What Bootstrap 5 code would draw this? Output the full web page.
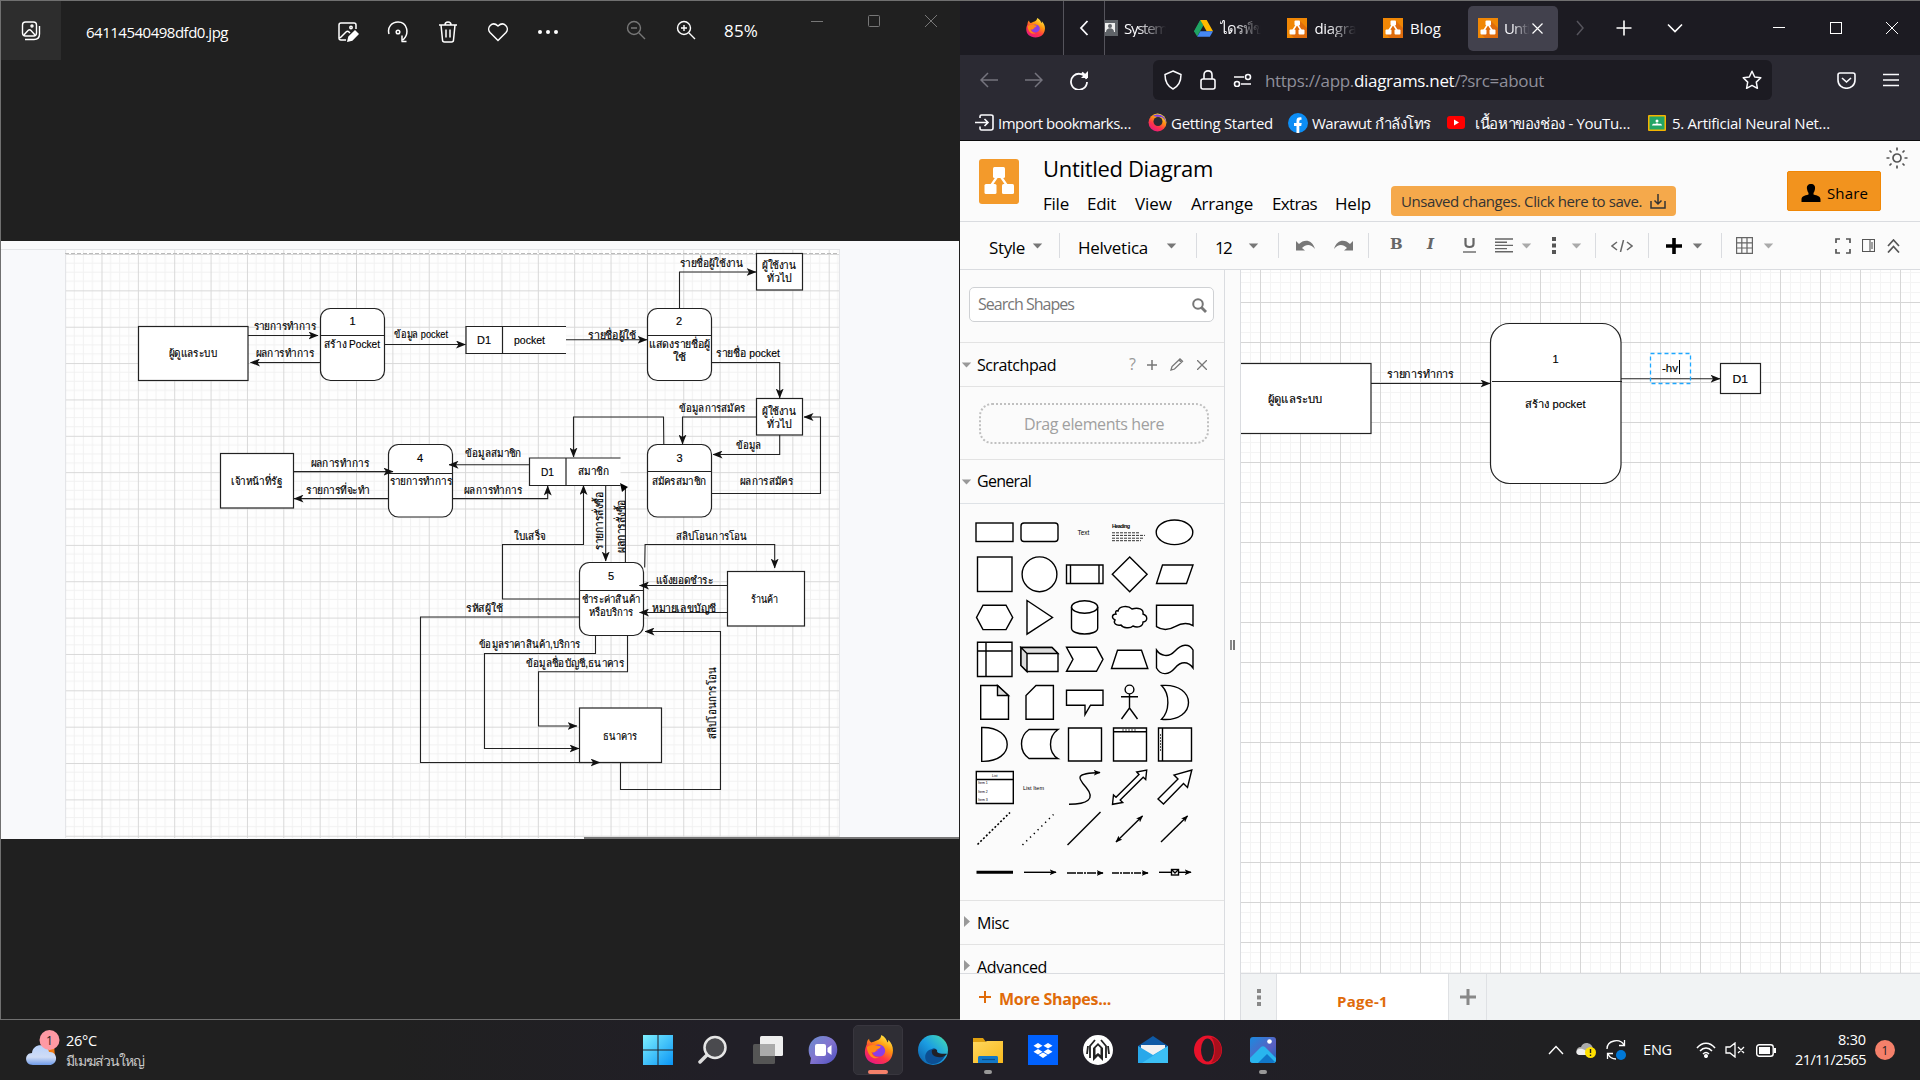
<!DOCTYPE html>
<html lang="th">
<head>
<meta charset="utf-8">
<title>Untitled Diagram</title>
<link rel="stylesheet" href="https://cdn.jsdelivr.net/npm/bootstrap@5.3.0/dist/css/bootstrap.min.css">
<script src="https://cdn.jsdelivr.net/npm/bootstrap@5.3.0/dist/js/bootstrap.bundle.min.js"></script>
<style>
body{width:1920px;height:1080px;overflow:hidden;background:#202020;font-family:"Open Sans","Noto Sans",sans-serif;font-size:15px;line-height:1.2;color:#000}
svg{display:block;flex:none}
.gr{display:grid;align-items:center;justify-items:center}
.gr>*{white-space:nowrap}
.l{justify-self:start}
.desk{height:1020px}
.photo{width:960px;background:#202020;border:1px solid #707070;border-right:0;color:#fff}
.photobar{height:59px;grid-template-columns:60px 25px 237px 50px 50px 50px 50px 50px 38px 50px 50px 13px 44px 20px 57px 57px 1fr}
.photobar>*{position:relative;top:1px}
.photobar>.first{background:#2d2d2d;width:60px;height:59px;top:0;display:flex;align-items:center;justify-content:center}
.photobar .up{top:-10px}
.photobar .zm{top:-1px}
.pct{font-size:17px}
.photoimg{margin-top:181px}
.browser{width:960px;border-top:1px solid #707070;background:#fbfbfb}
.tabs{height:54px;background:#1c1b22;color:#fbfbfe;grid-template-columns:103px 42px 19px 71px 17px 71.5px 27px 68.5px 27px 62px 90px 43px 45px 57px 76px 84px 1fr}
.tabs .line{justify-self:stretch;height:54px;border-left:1px solid #55545c;border-right:1px solid #55545c;display:flex;align-items:center;justify-content:center}
.fade1{-webkit-mask-image:linear-gradient(90deg,#000 30%,transparent 98%)}
.acttab{background:#42414d;width:90px;height:45px;border-radius:5px;display:flex;align-items:center;padding-left:10px;gap:6px}
.navi{height:50px;background:#2b2a33;grid-template-columns:6px 45px 45px 45px 52px 619px 49px 50px 1fr}
.urlbar{width:619px;height:40px;border-radius:6px;background:#1c1b22;grid-template-columns:2px 35px 35px 35px 5px 1fr 40px;color:#8f8f9a;font-size:17px}
.urlbar .l{margin-top:2px}
.urlbar b{font-weight:400;color:#fbfbfe}
.marks{height:36px;background:#2b2a33;color:#fbfbfe;border-bottom:1px solid #0c0c0d;grid-template-columns:10px 28px 145px 28px 113px 28px 132px 31px 166px 31px 1fr}
.marks .l{margin-top:1px}
.apphead{height:81px;border-bottom:1px solid #dadce0}
.logo{padding:18px 24px 0 19px}
.title{font-size:22px;line-height:26px;margin-top:14px}
.menu{grid-template-columns:44px 48px 56px 81px 63px 55px 286px;margin-top:8px;font-size:17px}
.unsaved{background:#f5a94b;border-radius:4px;width:285px;height:30px;color:#333;padding:0 10px;font-size:15px;margin:-3px 0 3px 1px}
.share{background:#f2931e;border:1px solid #f08705;border-radius:2px;width:94px;height:40px;padding:4px 0 0 13px;gap:6px;font-size:15px;margin:30px 0 0 111px}
.sun{margin:6px 0 0 5px}
.tools{height:48px;border-bottom:1px solid #dadce0;font-size:17px;justify-items:start;grid-template-columns:29px 43px 27px 19px 88px 30px 19px 33px 30px 18px 37px 35px 22px 37px 36px 32px 26px 31px 19px 24px 16px 37px 18px 26px 29px 15px 27px 72px 27px 25px 1fr}
.tools .l{margin-top:6px}
.tools b{font-family:"DejaVu Serif",serif;font-size:15px;color:#666;margin-top:-4px}
.sp{width:1px;height:25px;background:#dadce0}
.side{width:265px;border-right:1px solid #dadce0;height:750px}
.search{margin:17px 0 20px 9px;width:245px;height:35px;border:1px solid #cfd1d4;border-radius:5px;background:#fff;color:#777;padding:1px 6px 0 8px;font-size:16px}
.sec{height:44px;border-top:1px solid #e3e3e3;font-size:16px;grid-template-columns:17px 1fr}
.sec .l{margin-top:2px}
.sec .car{margin-right:5px}
.scr{grid-template-columns:17px 146px 19px 19px 31px 19px 1fr}
.scr .l{margin-top:3px}
.dropwrap{border-top:1px solid #e3e3e3;padding:.5px 0}
.drop{margin:15px 0 15px 19px;width:230px;height:41px;border:2px dotted #c0c0c0;border-radius:13px;color:#a0a0a0;font-size:16px;padding-top:3px}
.more{height:47px;border-top:1px solid #dadce0;color:#e06b0a;font-weight:700;font-size:16px;grid-template-columns:11px 28px 1fr;background:#fbfbfb}
.more .l{margin-top:5px}
.split{width:16px;border-right:1px solid #dadce0}
.grip{width:5px;height:10px;border-left:2px solid #888;border-right:2px solid #777}
.foot{height:47px;background:#f1f3f4;border-top:1px solid #dadce0;grid-template-columns:36px 172px 38px 1fr}
.foot>*{height:46px;display:flex;align-items:center;justify-content:center;justify-self:stretch;border-right:1px solid #dfe1e4}
.foot .page{background:#fff;color:#e06b0a;font-weight:700;font-size:15px;padding-top:8px}
.task{height:60px;background:linear-gradient(90deg,#202020 20%,#211f27 38%,#211f27 62%,#202022 80%);color:#fff;grid-template-columns:24px 42px 564px repeat(12,55px) 251px 30px 30px 28px 53px 32px 28px 32px 92px 37px 1fr}
.task .ff{width:50px;height:50px;border-radius:5px;background:#2f2e35;border:1px solid #38363e;display:flex;align-items:center;justify-content:center}
.task>.tr{font-size:14.5px;justify-self:end;line-height:20px;text-align:right}
.wx{font-size:14.5px;line-height:20px;margin-top:2px}
.wx2{color:#c8c8c8;font-size:14px}
.run{position:absolute;top:1070px;width:8px;height:3.5px;border-radius:2px;background:#999}
.d text{font-family:"Liberation Sans","Noto Sans",sans-serif;font-size:11px;fill:#000;stroke:#000;stroke-width:.15}
.d .ln{fill:none;stroke:#222;stroke-width:1.1}
.d .bx{fill:#fff;stroke:#222;stroke-width:1.2}
</style>
</head>
<body>
<svg width="0" height="0" class="position-absolute">
<defs>
<linearGradient id="gf" x1="0.8" y1="0" x2="0.2" y2="1"><stop offset="0" stop-color="#fff44f"/><stop offset=".35" stop-color="#ff980e"/><stop offset=".65" stop-color="#ff3647"/><stop offset="1" stop-color="#e31587"/></linearGradient>
<linearGradient id="ge" x1="0" y1="1" x2="1" y2="0"><stop offset="0" stop-color="#0c59a4"/><stop offset=".5" stop-color="#1b9de2"/><stop offset=".8" stop-color="#36c6c6"/><stop offset="1" stop-color="#66eb6e"/></linearGradient>
<linearGradient id="gw" x1="0" y1="0" x2="1" y2="1"><stop offset="0" stop-color="#7ef0ff"/><stop offset="1" stop-color="#0a95f5"/></linearGradient>
<linearGradient id="gc" x1="0" y1="0" x2="0" y2="1"><stop offset="0" stop-color="#b9d2fb"/><stop offset=".6" stop-color="#cfdcf5"/><stop offset="1" stop-color="#6f9be8"/></linearGradient>
<linearGradient id="gp" x1="0" y1="0" x2="1" y2="1"><stop offset="0" stop-color="#6b8fd0"/><stop offset=".5" stop-color="#8374cf"/><stop offset="1" stop-color="#4c4fc0"/></linearGradient>
<linearGradient id="gy" x1="0" y1="0" x2="1" y2="1"><stop offset="0" stop-color="#ffd75e"/><stop offset="1" stop-color="#f9b91d"/></linearGradient>
<linearGradient id="gi" x1="0" y1="0" x2="1" y2="1"><stop offset="0" stop-color="#1b8be0"/><stop offset=".6" stop-color="#5b5fc0"/><stop offset="1" stop-color="#0d6ac0"/></linearGradient>
<symbol id="firefox" viewBox="0 0 32 32"><path d="M4 10C4 7 5 5 6.500 4c0 2 1 3 2.500 4 2-1 3-1 5-2 3-1 5-2 5.500-6 4 2 6 5 6.500 8 1-1 1-2 1-3 5 5 6 11 4 17-2 6-7 9-14 9C8 31 2 26 2 18c0-3 1-6 2-8z" fill="url(#gf)"/><path d="M12 12c3-3 9-2 11 2s-1 9-6 9c-4 0-7-2-7-6 2 1 4 1 6-1-2 0-4-2-4-4z" fill="#8a3fe6"/><path d="M4 13c2-2 6-3 9-2 2 0 3 1 6 1-1 3-4 3-5 4-1 3-3 3-5 2 1 4 4 6 8 6-6 3-12-2-13-11z" fill="#ff8a16"/></symbol>
<symbol id="dio" viewBox="0 0 20 20"><path fill="#f08705" d="M0 0h20v20H0z"/><path fill="#df6c0c" d="M13 3l7 7v10H7l-4-4 7-8z"/><path d="M10 6L5.500 13M10 6l4.500 7" stroke="#fff" stroke-width="1.500"/><rect x="7.500" y="2.500" width="5.500" height="5" rx="1" fill="#fff"/><rect x="2.500" y="11.500" width="6" height="5" rx="1" fill="#fff"/><rect x="11.500" y="11.500" width="6" height="5" rx="1" fill="#fff"/></symbol>
<symbol id="car" viewBox="0 0 12 7"><path d="M.5.5h11L6 6.500z"/></symbol>
<marker id="ar" viewBox="0 0 10 8" refX="9.500" refY="4" markerWidth="10" markerHeight="8" markerUnits="userSpaceOnUse" orient="auto-start-reverse"><path d="M0 0l10 4-10 4 2.500-4z" fill="#111"/></marker>
<marker id="as" viewBox="0 0 10 8" refX="9" refY="4" markerWidth="7" markerHeight="6.500" markerUnits="userSpaceOnUse" orient="auto-start-reverse"><path d="M0 0l10 4-10 4 2.500-4z" fill="#000"/></marker>
<pattern id="g36" x="101.500" y="254" width="36.360" height="36.360" patternUnits="userSpaceOnUse"><path d="M9.100 0v36.400M18.200 0v36.400M27.300 0v36.400M0 9.100h36.400M0 18.200h36.400M0 27.300h36.400" stroke="#f1f1f1" fill="none"/><path d="M.5 0v36.400M0 .5h36.400" stroke="#d8d8d8" stroke-width="1" fill="none"/></pattern>
<pattern id="g40" x="1260" y="302" width="40" height="40" patternUnits="userSpaceOnUse"><path d="M10.500 0v40M20.500 0v40M30.500 0v40M0 10.500h40M0 20.500h40M0 30.500h40" stroke="#f4f4f4" fill="none"/><path d="M.5 0v40M0 .5h40" stroke="#d6d6d6" fill="none"/></pattern>
</defs>
</svg>

<div class="desk d-flex">
 <section class="photo">
  <div class="photobar gr">
   <span class="first"><svg width="20" height="20" viewBox="0 0 20 20" fill="none" stroke="#fff" stroke-width="1.400"><rect x="1.500" y="1" width="14" height="14" rx="3"/><path d="M4 18.500h9c4 0 5.500-1.500 5.500-5.500V5M3 14l4-4.500c1-1 2-1 3 0l4 4.500"/><circle cx="11" cy="5" r="1"/></svg></span>
   <i></i><span class="l" data-w="142">64114540498dfd0.jpg</span>
   <svg width="22" height="22" viewBox="0 0 22 22" fill="none" stroke="#fff" stroke-width="1.500"><path d="M9 19H4c-1 0-2-1-2-2V4c0-1 1-2 2-2h13c1 0 2 1 2 2v4M3 17l6-6c1-1 2-1 3 0l1 1"/><circle cx="14" cy="6.500" r="1.200"/><path d="M11 20l1-4 6-6 3 3-6 6z" fill="#fff"/></svg>
   <svg width="22" height="22" viewBox="0 0 22 22" fill="none" stroke="#fff" stroke-width="1.500"><path d="M2 13C0 6 5 1 11 1c9 0 12 11 5 18M14.500 20.500h5M15 20.500v-6"/><circle cx="11" cy="11" r="1.800"/></svg>
   <svg width="20" height="22" viewBox="0 0 20 22" fill="none" stroke="#fff" stroke-width="1.500"><path d="M1 4h18M7 4c0-4 6-4 6 0M3 4l1.500 15c0 1 1 2 2 2h7c1 0 2-1 2-2L17 4M8 8.500v8M12 8.500v8"/></svg>
   <svg width="22" height="20" viewBox="0 0 22 20" fill="none" stroke="#fff" stroke-width="1.500"><path d="M11 18.500L3 10.500C-1 6 5-1.500 11 4c6-5.500 12 2 8 6.500z"/></svg>
   <svg width="22" height="6" viewBox="0 0 22 6" fill="#fff"><circle cx="3" cy="3" r="2"/><circle cx="11" cy="3" r="2"/><circle cx="19" cy="3" r="2"/></svg>
   <i></i>
   <svg class="zm" width="20" height="20" viewBox="0 0 20 20" fill="none" stroke="#777" stroke-width="1.400"><circle cx="8" cy="8" r="6.500"/><path d="M13 13l6 6M5 8h6"/></svg>
   <svg class="zm" width="20" height="20" viewBox="0 0 20 20" fill="none" stroke="#fff" stroke-width="1.400"><circle cx="8" cy="8" r="6.500"/><path d="M13 13l6 6M5 8h6M8 5v6"/></svg>
   <i></i><span class="l pct" data-w="34">85%</span><i></i>
   <svg class="up" width="14" height="14" viewBox="0 0 14 14" stroke="#777"><path d="M1 7.500h12"/></svg>
   <svg class="up" width="14" height="14" viewBox="0 0 14 14" stroke="#777" fill="none"><rect x="1.500" y="1.500" width="11" height="11" rx="1"/></svg>
   <svg class="up" width="14" height="14" viewBox="0 0 14 14" stroke="#777"><path d="M1 1l12 12M13 1L1 13"/></svg>
  </div>
  <svg class="d photoimg" width="959" height="598" viewBox="1 241 959 598">
   <rect x="1" y="241" width="958" height="598" fill="#f8f9fb"/><rect x="1" y="241" width="958" height="8" fill="#fafafc"/>
   <rect x="65" y="249" width="774" height="589" fill="#fefefe"/><rect x="65" y="249" width="774" height="589" fill="url(#g36)"/>
   <path d="M65.500 249v589M839.500 249v589M1 249.500h838" stroke="#e4e5e8"/><path d="M65 253.500h774" stroke="#fff"/><path d="M65 253.500h774" stroke="#bbb" stroke-dasharray="4 2"/>
   <path d="M584 838h375" stroke="#777" stroke-width="2"/>
   <g class="bx"><rect x="138.500" y="326.500" width="109.500" height="54"/><rect x="320.500" y="308.500" width="64" height="72" rx="10"/><rect x="647.500" y="308.500" width="64" height="72" rx="10"/><rect x="647.500" y="444.500" width="64" height="72.500" rx="10"/><rect x="388.500" y="444.500" width="64" height="72.500" rx="10"/><rect x="579.500" y="562.500" width="64" height="73" rx="10"/><rect x="756.500" y="253.500" width="46" height="36.500"/><rect x="756.500" y="398.500" width="46" height="36.500"/><rect x="220.500" y="453.500" width="73" height="54.500"/><rect x="727.500" y="571.500" width="77" height="54.500"/><rect x="579.500" y="708" width="82" height="54.500"/><path d="M566 326.500H466V353.500h100M502.500 326.500v27" /><path d="M620.500 458H529.500v27.500h91M566 458v27.500"/></g>
   <g class="ln"><path d="M320.500 335.500h64M647.500 335.500h64M647.500 471.500h64M388.500 473.500h64M579.500 590.500h64"/>
   <g marker-end="url(#ar)"><path d="M248 335.500h70"/><path d="M320 362.500h-69.500"/><path d="M384 344.500h81.500"/><path d="M566 339.800h81"/><path d="M679.500 308v-36h76.500"/><path d="M711.500 362.500h68.200v35.500"/><path d="M711.500 493.500h109v-76.500H804"/><path d="M779.700 435v19.500H713"/><path d="M756 417h-73.500v27"/><path d="M663.800 444l-.3-27h-90v40"/><path d="M293.600 471.600H393"/><path d="M388 498.600H294"/><path d="M529.700 464.700H449"/><path d="M452.700 498.600h95V486"/><path d="M579.500 599h-77v-54.500h81v-59"/><path d="M605.700 486v75"/><path d="M644.700 567.500l.4-23h129.600V568"/><path d="M727 585.500h-87.500"/><path d="M727 612.500h-87.500"/><path d="M620.500 762.500v27h100V631.500H645"/><path d="M579.500 617h-159v145.500H600"/><path d="M595.500 635.500v18H484.500v95H579"/><path d="M627.500 635.500v36.200h-89V726H577"/></g>
   <path d="M625.400 562v-74"/></g><path d="M620 483l8 4-6 5z"/>
   <g id="tl"></g>
  </svg>
 </section>

 <section class="browser">
  <div class="tabs gr">
   <svg width="20" height="20" style="margin-left:46px"><use href="#firefox"/></svg>
   <span class="line"><svg width="12" height="16" viewBox="0 0 12 16" fill="none" stroke="#fbfbfe" stroke-width="1.800"><path d="M9.500 1L3 8l6.500 7"/></svg></span>
   <svg class="l" width="14" height="18" viewBox="0 0 14 18"><path d="M0 1h13v16H0" fill="#5f6368"/><path d="M0 4h10v9H0" fill="#eee"/><circle cx="5" cy="7" r="2" fill="#5f6368"/><path d="M1 13c0-5 8-5 8 0z" fill="#5f6368"/></svg>
   <span class="l fade1" data-w="43">System</span>
   <svg width="19" height="17" viewBox="0 0 18 16"><path fill="#11a861" d="M6 0h3.500L3.300 11.500 0 11z"/><path fill="#1fa463" d="M6 0L0 10.500l3 5L9 5z"/><path fill="#ffba00" d="M6 0h6l6 10.500h-6z"/><path fill="#4688f4" d="M6 10.500h12l-3 5.300H3z"/></svg>
   <span class="l fade1 ms-2" data-w="41">ไดรฟ์ข</span>
   <svg width="20" height="20"><use href="#dio"/></svg><span class="l fade1 ms-1" data-w="42">diagra</span>
   <svg width="20" height="20"><use href="#dio"/></svg><span class="l ms-1" data-w="31">Blog</span>
   <span class="acttab"><svg width="20" height="20"><use href="#dio"/></svg><span class="fade1" data-w="26">Unti</span><svg width="11" height="11" viewBox="0 0 11 11" stroke="#fff" stroke-width="1.200" style="margin-left:-4px"><path d="M.5.500l10 10M10.500.500l-10 10"/></svg></span>
   <svg width="10" height="16" viewBox="0 0 10 16" fill="none" stroke="#55545c" stroke-width="1.500"><path d="M2 1l6 7-6 7"/></svg>
   <svg width="16" height="16" viewBox="0 0 16 16" stroke="#fff" stroke-width="1.600"><path d="M8 .5v15M.5 8h15"/></svg>
   <svg width="16" height="10" viewBox="0 0 16 10" fill="none" stroke="#fff" stroke-width="1.600"><path d="M1 1.500l7 7 7-7"/></svg>
   <i></i>
   <svg class="l" width="72" height="14" viewBox="0 0 72 14" stroke="#fff" fill="none" style="margin-left:-6px"><path d="M0 6.500h12"/><rect x="57.500" y="1.500" width="11" height="11"/></svg>
   <svg width="14" height="14" viewBox="0 0 14 14" stroke="#fff"><path d="M1 1l12 12M13 1L1 13"/></svg>
  </div>
  <div class="navi gr"><i></i>
   <svg width="18" height="16" viewBox="0 0 18 16" fill="none" stroke="#75747e" stroke-width="1.500"><path d="M18 8H1M8 1L1 8l7 7"/></svg>
   <svg width="18" height="16" viewBox="0 0 18 16" fill="none" stroke="#75747e" stroke-width="1.500"><path d="M0 8h17M10 1l7 7-7 7"/></svg>
   <svg width="20" height="20" viewBox="0 0 20 20" fill="none" stroke="#fbfbfe" stroke-width="1.800"><path d="M17.500 9A8 8 0 1 0 18 12M16 5L13 2.500"/><path d="M19 1v7h-7z" fill="#fbfbfe" stroke="none"/></svg><i></i>
   <div class="urlbar gr"><i></i>
    <svg width="20" height="20" viewBox="0 0 20 20" fill="none" stroke="#fbfbfe" stroke-width="1.500"><path d="M10 1l8 3.500c0 7-2 11.500-8 14.500-6-3-8-7.500-8-14.500z"/></svg>
    <svg width="18" height="20" viewBox="0 0 18 20" fill="none" stroke="#fbfbfe" stroke-width="1.600"><rect x="2" y="9" width="14" height="10" rx="2"/><path d="M5 9V5c0-5.500 8-5.500 8 0v4"/></svg>
    <svg width="19" height="14" viewBox="0 0 19 14" fill="none" stroke="#fbfbfe" stroke-width="1.600"><path d="M1 4h10M8 11h10"/><circle cx="15" cy="4" r="2.500"/><circle cx="4" cy="11" r="2.500"/></svg><i></i>
    <span class="l" data-w="279">https://app.<b>diagrams.net</b>/?src=about</span>
    <svg width="20" height="20" viewBox="0 0 20 20" fill="none" stroke="#fbfbfe" stroke-width="1.500" stroke-linejoin="round"><path d="M10 1.300l2.700 5.700 6.100.8-4.500 4.300 1.100 6.200L10 15.400l-5.400 2.900 1.100-6.200L1.200 7.800 7.300 7z"/></svg>
   </div><i></i>
   <svg width="19" height="17" viewBox="0 0 19 17" fill="none" stroke="#fbfbfe" stroke-width="1.600"><path d="M3 1h13c1 0 2 1 2 2v5c0 11-17 11-17 0V3c0-1 1-2 2-2zM5 6l4.500 4L14 6"/></svg>
   <svg class="l" width="16" height="14" viewBox="0 0 16 14" stroke="#fbfbfe" stroke-width="1.500" style="margin-left:12px"><path d="M0 1.500h16M0 7h16M0 12.500h16"/></svg>
  </div>
  <div class="marks gr"><i></i>
   <svg width="19" height="17" viewBox="0 0 19 17" fill="none" stroke="#fbfbfe" stroke-width="1.600"><path d="M5 4V2.500C5 1.500 5.500 1 6.500 1H16c1 0 2 .5 2 1.500V14c0 1-1 2-2 2H6.500C5.500 16 5 15 5 14v-1.500M0 8.500h13M9.500 5l3.500 3.500L9.500 12"/></svg>
   <span class="l" data-w="133">Import bookmarks…</span>
   <svg width="19" height="19" viewBox="0 0 19 19"><circle cx="9.500" cy="9.500" r="9" fill="url(#gf)"/><path d="M5 3c5-4 14 0 13 8 0-4-4-8-8-7z" fill="#7a3fe0"/><circle cx="10" cy="8.500" r="4.500" fill="#2b2a33"/></svg>
   <span class="l" data-w="102">Getting Started</span>
   <svg width="20" height="20" viewBox="0 0 20 20"><circle cx="10" cy="10" r="10" fill="#0c8df5"/><path d="M8.500 20v-7H6v-3h2.500V8c0-3 1.500-4 5-3.600v2.500c-2-.2-2.200.3-2.200 3.100h2.400l-.5 3h-1.900v7z" fill="#fff"/></svg>
   <span class="l" data-w="118">Warawut กำลังโทร</span>
   <svg width="18" height="13" viewBox="0 0 18 13" style="margin-right:7px"><rect width="18" height="13" rx="3" fill="red"/><path d="M7 3.500l5 3-5 3z" fill="#fff"/></svg>
   <span class="l" data-w="154">เนื้อหาของช่อง - YouTu…</span>
   <svg width="18" height="16" viewBox="0 0 18 16"><rect width="18" height="16" rx="1" fill="#f4b400"/><rect x="1.500" y="1.500" width="15" height="13" fill="#23a566"/><circle cx="9" cy="6" r="1.500" fill="#fff"/><path d="M4 10.500c0-2 2.500-2 3-1.500 1-1 3-1 4 0 .5-.5 3-.5 3 1.500z" fill="#fff"/></svg>
   <span class="l" data-w="158">5. Artificial Neural Net…</span>
  </div>
  <div class="apphead d-flex">
   <div class="logo"><svg width="40" height="45" viewBox="0 0 40 45"><rect width="40" height="45" rx="3" fill="#f39a2b"/><path d="M20 15L11 28M20 15l9 13" stroke="#fff" stroke-width="2.200"/><rect x="14" y="8" width="12" height="11" rx="1.500" fill="#fff"/><rect x="5.500" y="25" width="12" height="10" rx="1.500" fill="#fff"/><rect x="23" y="25" width="12" height="10" rx="1.500" fill="#fff"/></svg></div>
   <div><div class="title"><span data-w="170">Untitled Diagram</span></div>
    <div class="menu gr"><span class="l" data-w="26">File</span><span class="l" data-w="29">Edit</span><span class="l" data-w="37">View</span><span class="l" data-w="62">Arrange</span><span class="l" data-w="45">Extras</span><span class="l" data-w="36">Help</span>
     <span class="unsaved l d-flex align-items-center justify-content-between"><span data-w="241">Unsaved changes. Click here to save.</span><svg width="16" height="15" viewBox="0 0 16 15" fill="none" stroke="#333" stroke-width="1.500"><path d="M1 7v7h14V7M8 0v10M4.500 6.500L8 10l3.500-3.500"/></svg></span></div></div>
   <div class="share d-flex align-items-center"><svg width="20" height="18" viewBox="0 0 20 18"><path d="M10 0c3 0 4.500 2 4 5-.3 2-1 3-1.500 4v1.500c4 1 7 2 7 5V18H.5v-2.500c0-3 3-4 7-5V9C7 8 6.300 7 6 5c-.5-3 1-5 4-5z"/></svg><span data-w="41">Share</span></div>
   <svg class="sun" width="22" height="22" viewBox="0 0 22 22" fill="none" stroke="#555" stroke-width="1.700"><circle cx="11" cy="11" r="4"/><path d="M11 .5v3M11 18.500v3M.5 11h3M18.500 11h3M3.500 3.500l2 2M16.500 16.500l2 2M18.500 3.500l-2 2M3.500 18.500l2-2"/></svg>
  </div>
  <div class="tools gr"><i></i><span class="l" data-w="36">Style</span><svg width="11" height="6" fill="#777"><use href="#car"/></svg>
   <i class="sp"></i><span class="l" data-w="70">Helvetica</span><svg width="11" height="6" fill="#777"><use href="#car"/></svg><i class="sp"></i><span class="l" data-w="16">12</span><svg width="11" height="6" fill="#777"><use href="#car"/></svg><i class="sp"></i>
   <svg width="20" height="11" viewBox="0 0 20 11" fill="#777"><path d="M0 1v9.500h9L6 8c4-4 9-4 13 1C16-1 8-1 3 4z"/></svg>
   <svg width="20" height="11" viewBox="0 0 20 11" fill="#777"><path d="M20 1v9.500h-9L14 8C10 4 5 4 1 9 4-1 12-1 17 4z"/></svg>
   <i class="sp"></i>
   <b>B</b><b class="fst-italic">I</b>
   <svg width="13" height="15" viewBox="0 0 13 15" fill="none" stroke="#666"><path d="M2.500 0v6c0 4 8 4 8 0V0" stroke-width="2.200"/><path d="M0 14h13" stroke-width="1.400"/></svg>
   <svg width="18" height="15" viewBox="0 0 18 15" stroke="#666" stroke-width="1.400"><path d="M0 1h18M0 4.200h12M0 7.400h18M0 10.600h12M0 13.800h18"/></svg>
   <svg width="11" height="6" fill="#aaa"><use href="#car"/></svg>
   <svg width="4" height="17" viewBox="0 0 4 17" fill="#555"><path d="M0 0h4v4H0zM0 6.500h4v4H0zM0 13h4v4H0z"/></svg>
   <svg width="11" height="6" fill="#aaa"><use href="#car"/></svg>
   <i class="sp"></i>
   <svg width="22" height="12" viewBox="0 0 22 12" fill="none" stroke="#666" stroke-width="1.500"><path d="M6 2L1 6l5 4M16 2l5 4-5 4M12.500 0l-3 12"/></svg>
   <i class="sp"></i>
   <svg width="16" height="16" viewBox="0 0 16 16" stroke="#000" stroke-width="3.600"><path d="M8 0v16M0 8h16"/></svg>
   <svg width="11" height="6" fill="#777"><use href="#car"/></svg>
   <i class="sp"></i>
   <svg width="17" height="17" viewBox="0 0 17 17" fill="none" stroke="#666" stroke-width="1.200"><path d="M.6.600h15.800v15.800H.6zM.6 5.800h16M.6 11h16M5.800.600v16M11 .6v16"/></svg>
   <svg width="11" height="6" fill="#aaa"><use href="#car"/></svg>
   <svg width="16" height="16" viewBox="0 0 16 16" fill="none" stroke="#555" stroke-width="1.700"><path d="M1 5V1h4M11 1h4v4M15 11v4h-4M5 15H1v-4"/></svg>
   <svg width="13" height="13" viewBox="0 0 13 13" fill="none" stroke="#555" stroke-width="1.100"><path d="M.5.500h12v12H.5zM8 .5v12M10 3v7"/></svg>
   <svg width="13" height="14" viewBox="0 0 13 14" fill="none" stroke="#555" stroke-width="1.700"><path d="M1 7l5.500-6L12 7M1 13.500l5.500-6 5.500 6"/></svg>
  </div>
  <div class="d-flex">
   <aside class="side d-flex flex-column">
    <div class="overflow-hidden" style="height:703px">
    <div class="search d-flex align-items-center justify-content-between"><span data-w="96">Search Shapes</span><svg width="15" height="15" viewBox="0 0 15 15" fill="none" stroke="#777"><circle cx="6" cy="6" r="4.800" stroke-width="2"/><path d="M9.500 9.500l4.500 4.500" stroke-width="2.800"/></svg></div>
    <div class="sec scr gr"><svg class="car" width="11" height="6" fill="#999"><use href="#car"/></svg><span class="l" data-w="79">Scratchpad</span>
     <span style="color:#999" data-w="7">?</span><svg width="10" height="10" viewBox="0 0 10 10" stroke="#777" stroke-width="1.500"><path d="M5 0v10M0 5h10"/></svg><svg width="14" height="13" viewBox="0 0 14 13" fill="none" stroke="#777" stroke-width="1.300"><path d="M1 12l1-3.500L10 1l2.500 2.300L4.500 11zM9 2l2.500 2.500"/></svg><svg width="10" height="10" viewBox="0 0 10 10" stroke="#777" stroke-width="1.300"><path d="M0 0l10 10M10 0L0 10"/></svg></div>
    <div class="dropwrap"><div class="drop d-flex align-items-center justify-content-center"><span data-w="140">Drag elements here</span></div></div>
    <div class="sec gr"><svg class="car" width="11" height="6" fill="#999"><use href="#car"/></svg><span class="l" data-w="54" style="margin-top:1px">General</span></div>
    <svg class="border-top" width="264" height="397" viewBox="960 504 264 396" fill="#fff" stroke="#000" stroke-width="1.400">
     <rect x="976" y="523" width="37" height="18.500"/><rect x="1021" y="523" width="37" height="18.500" rx="3"/><ellipse cx="1174.500" cy="532.300" rx="18.300" ry="12.300"/>
     <path d="M1112 532.800h27M1112 535.400h33M1112 538.200h31M1112 540.700h29" stroke-dasharray="3 1" stroke-width=".8"/>
     <rect x="977.500" y="557" width="34.500" height="34.500"/><circle cx="1039.500" cy="574.300" r="17.400"/><path d="M1066.500 565h36.500v18.500h-36.500zM1070.500 565v18.500M1099 565v18.500M1129.700 557l17.400 17.300-17.400 17.400-17.400-17.400zM1162.500 565H1193l-6.500 18.500h-30z"/>
     <path d="M983 605.200h23l6.700 12.200-6.700 12.200h-23l-6.500-12.200zM1027 600.500l25.500 17-25.500 16.700zM1071.500 607v21c0 8 26.200 8 26.200 0v-21M1156.500 605.200h36.500v20.500c-5-3-11-3-18 1s-14 3-18.500 0z"/><ellipse cx="1084.600" cy="607" rx="13.100" ry="6.200"/>
     <path d="M1118 611c1-5 10-6 14-2 6-2 12 0 11 5 5 2 5 7 0 8 0 5-6 6-10 4-3 3-10 2-12-1-5 1-8-2-6-5-4-2-3-6 1-6-1-2 0-4 2-3z"/>
     <path d="M977.500 642.300H1012v34.200h-34.500zM977.500 651H1012M986 642.300v34.200"/><path d="M1021 647.500h31l6 6v18h-31l-6-6z"/><path d="M1021 647.500h31l6 6h-31zM1021 647.500l6 6v18l-6-6z" fill="#ddd"/><path d="M1066.500 647.300h30l6.500 12-6.500 12h-30l6.500-12zM1117.500 650.300h24l6.300 18.200h-36.300zM1156.500 650c4 6 12 8 18.500 1s14-8 18-1v18c-5-7-12-7-18 0s-14 8-18.500 0z"/>
     <path d="M980.700 685.500h17l10.800 10v23.800h-27.800z"/><path d="M997.500 685.500v10h11z" fill="#ddd"/><path d="M1036 685.500h17.400v33.800h-27.400v-23.800zM1066.500 690.200h36.500v15h-12.500l-5.500 9.500v-9.500h-18.500z"/><path d="M1129.500 694v14M1121 696.700h17M1129.500 708l-8 11M1129.500 708l8 11M1161.500 685.500c36-3 36 37 0 33.800 8-8 9-25 0-33.800z"/><circle cx="1129.500" cy="689.500" r="4.400"/>
     <path d="M981.700 727.500c34-1 34 35 0 33.800zM1029 729.500h29c-10 7-10 23 0 29h-29c-10-7-10-22 0-29z"/><path d="M1068.500 728h33v33h-33zM1113.500 728h33v33h-33zM1113.500 731.700h33M1158.500 728h33v33h-33zM1162.500 728v33"/><path d="M1122 730h14M1160.500 734v18" stroke-width=".7" stroke-dasharray="2 1"/>
     <path d="M976.300 771.500h37v32h-37zM976.300 779.500h37"/>
     <g fill="none"><path d="M1069 804.300c18 0 27-5 17-17-9-10-11-14 14-14.800" marker-end="url(#as)"/><path d="M977.500 844.500L1010 812.500" stroke-dasharray="2 2" stroke-width="1.600"/><path d="M1022.500 845l31-30.500" stroke-dasharray="1.300 4" stroke-width="1.500"/><path d="M1067.500 845l33-33"/><path d="M1116 842l26.500-26" marker-start="url(#as)" marker-end="url(#as)"/><path d="M1161 842l26.500-26" marker-end="url(#as)"/><path d="M976.500 872.300H1013" stroke-width="3"/><path d="M1024 872.300h32" marker-end="url(#as)"/><path d="M1067 873h36" stroke-dasharray="9 1 6 1 2 1" marker-end="url(#as)"/><path d="M1112 873h36" stroke-dasharray="7 1 2 1" marker-end="url(#as)"/><path d="M1159 872.300h32" marker-end="url(#as)"/></g>
     <path d="M1112.500 804.300l1-9.300 2.500 2.300 23-22.800-2.300-2.500 10-2-1 9.500-2.500-2.200-23 22.700 2.500 2.500zM1158 799l20-20-4-4 17.800-5-4.300 17.500-4-4-20 20.500z"/>
     <rect x="1171.500" y="869.500" width="7" height="5.500"/><path d="M1172 870l3 3 3-3" fill="none"/>
     <g stroke="none" fill="#000" font-family="Liberation Sans" font-size="6.500"><text x="1077.500" y="535">Text</text><text x="1112" y="527.500" font-weight="700" font-size="5.500" textLength="18">Heading</text><text x="1023" y="789.500" font-size="5.500" textLength="21">List Item</text><text x="992" y="777" font-size="3.500">List</text><text x="978" y="784" font-size="3.500">Item 1</text><text x="978" y="792.500" font-size="3.500">Item 2</text><text x="978" y="800.500" font-size="3.500">Item 3</text></g>
    </svg>
    <div class="sec gr"><svg width="6" height="11" viewBox="0 0 6 11" fill="#999" style="margin:-3px 4px 0 0"><path d="M0 0l6 5.500L0 11z"/></svg><span class="l" data-w="32" style="margin-top:3px">Misc</span></div>
    <div class="sec gr"><svg width="6" height="11" viewBox="0 0 6 11" fill="#999" style="margin:-3px 4px 0 0"><path d="M0 0l6 5.500L0 11z"/></svg><span class="l" data-w="70">Advanced</span></div>
    </div>
    <div class="more gr"><i></i><svg width="12" height="12" viewBox="0 0 12 12" stroke="#e06b0a" stroke-width="2"><path d="M6 0v12M0 6h12"/></svg><span class="l" data-w="112">More Shapes...</span></div>
   </aside>
   <div class="split d-flex align-items-center justify-content-center"><span class="grip"></span></div>
   <div>
    <svg class="d" width="679" height="703" viewBox="1241 270 679 703"><rect x="1240" y="270" width="680" height="703" fill="#fff"/><rect x="1240" y="270" width="680" height="703" fill="url(#g40)"/>
     <g class="bx"><rect x="1200" y="363.500" width="171" height="70"/><rect x="1490.500" y="323.500" width="130.500" height="160" rx="19"/><rect x="1720.500" y="363.500" width="40" height="30"/></g>
     <path d="M1492 381.500h130" stroke="#222" stroke-width="1.200"/>
     <g class="ln"><path d="M1371 383.500h119" marker-end="url(#ar)"/><path d="M1621 378.700h99" marker-end="url(#ar)"/></g>
     <rect x="1650.500" y="353.500" width="40" height="30" fill="none" stroke="#1ea7ff" stroke-width="1.300" stroke-dasharray="4 3"/><path d="M1679.500 360v14" stroke="#000"/>
     <g id="tr"></g>
    </svg>
    <div class="foot gr"><span><svg width="4" height="17" viewBox="0 0 4 17" fill="#888"><path d="M0 0h4v4H0zM0 6.500h4v4H0zM0 13h4v4H0z"/></svg></span><span class="page"><span data-w="51">Page-1</span></span><span><svg width="16" height="16" viewBox="0 0 16 16" stroke="#888" stroke-width="3"><path d="M8 0v16M0 8h16"/></svg></span></div>
   </div>
  </div>
 </section>
</div>

<footer class="task gr"><i></i>
 <svg class="l" width="38" height="42" viewBox="24 1025 38 42" style="margin-top:-7px"><path d="M44 1050l10-6 1 12z" fill="#f07a12"/><path d="M33 1064c-9 0-9-12-1-12 1-10 15-10 17-1 9-1 10 13 0 13z" fill="url(#gc)"/><circle cx="49.500" cy="1039" r="10" fill="#ff99a4"/><text x="46" y="1043.500" font-size="12" fill="#222">1</text></svg>
 <span class="l wx"><span class="d-inline-block" data-w="31">26°C</span><br><span class="d-inline-block wx2" data-w="75">มีเมฆส่วนใหญ่</span></span>
 <svg width="30" height="30" viewBox="0 0 30 30" fill="url(#gw)"><path d="M0 0h14.500v14.500H0zM15.500 0H30v14.500H15.500zM0 15.500h14.500V30H0zM15.500 15.500H30V30H15.500z"/></svg>
 <svg width="30" height="30" viewBox="0 0 30 30"><path d="M2 27l8-8" stroke="#ddd" stroke-width="3.500" stroke-linecap="round"/><circle cx="17" cy="12.500" r="10.500" fill="#4a4a4e" stroke="#e6e6e6" stroke-width="2.500"/></svg>
 <svg width="30" height="30" viewBox="0 0 30 30"><rect x="7" y="1" width="23" height="20" rx="1.500" fill="#eee"/><rect y="9" width="22" height="20" rx="1.500" fill="#555"/><path d="M7 9h15v12H7z" fill="#aaa"/></svg>
 <svg width="30" height="30" viewBox="0 0 30 30"><path d="M15 1c20 0 18 28 0 28H2l1-6C-3 14 3 1 15 1z" fill="url(#gp)"/><rect x="7" y="9" width="11" height="12" rx="2" fill="#fff"/><path d="M19.500 13l4-3v10l-4-3z" fill="#fff"/></svg>
 <span class="ff"><svg width="30" height="30"><use href="#firefox"/></svg></span>
 <svg width="30" height="30" viewBox="0 0 30 30"><circle cx="15" cy="15" r="15" fill="url(#ge)"/><path d="M14 14c2-2 6 0 5 5 3 2 7 2 9 0-3 8-12 13-19 8-4-5-1-12 5-13z" fill="#0c4f93"/><path d="M14 15c-1 3 1 7 6 7 4 1 7-1 9-3 0-1-6 1-10-2 1-2-1-4-5-2z" fill="#202027"/></svg>
 <svg width="30" height="30" viewBox="0 0 30 30"><path d="M0 3h10l3 4H0z" fill="#e0a010"/><path d="M0 7h12l2-1h16v21c0 1 0 1-1 1H1c-1 0-1 0-1-1z" fill="url(#gy)"/><path d="M5 28v-5c0-2 1-2 2-2h16c1 0 2 0 2 2v5z" fill="#1378c8"/><path d="M9 24.500h13" stroke="#0d4f8c" stroke-width="1.200"/></svg>
 <svg width="30" height="30" viewBox="0 0 30 30"><path d="M0 0h30v30H0z" fill="#0061fe"/><path d="M10 8l4.500 2.800L10 13.600l-4.500-2.800zM20 8l4.500 2.800L20 13.600l-4.500-2.800zM10 14l4.500 2.800-4.500 2.800-4.500-2.800zM20 14l4.500 2.800-4.500 2.800-4.500-2.800zM15 17.500l4.500 2.500-4.500 3-4.500-3z" fill="#fff"/></svg>
 <svg width="30" height="30" viewBox="0 0 30 30"><circle cx="15" cy="15" r="15" fill="#fff"/><path d="M10 26V13l5-5 5 5v13l-5-5z" fill="#222"/><path d="M7 23V11l5-6M23 23V11l-5-6M4 19l1-8M26 19l-1-8" fill="none" stroke="#222" stroke-width="1.800"/><path d="M12.500 20v-7l2.500-2.500 2.500 2.500v7L15 18z" fill="#fff"/></svg>
 <svg width="30" height="30" viewBox="0 0 30 30"><path d="M0 11L15 1l15 10v3H0z" fill="#0f5aa5"/><path d="M3 10h24v10H3z" fill="#f2f2f2"/><path d="M0 11l15 9 15-9v17H0z" fill="#28a8ea"/><path d="M30 11v17H4z" fill="#3cc0f5"/></svg>
 <svg width="30" height="30" viewBox="0 0 30 30"><ellipse cx="15" cy="15" rx="14" ry="14.500" fill="#e8122a"/><ellipse cx="14.500" cy="15" rx="6.500" ry="11.500" fill="#202027"/><path d="M18 2c14 3 14 23 0 26 5-5 5-21 0-26z" fill="#a80f1c"/></svg>
 <svg width="26" height="26" viewBox="0 0 26 26"><rect width="26" height="26" rx="3" fill="url(#gi)"/><path d="M0 21l11-11c1-1 3-1 4 0l11 11v2c0 2-1 3-3 3H3c-2 0-3-1-3-3z" fill="#29b5ee"/><path d="M8 26l9-9 8 8-2 1z" fill="#1177c9"/><circle cx="19.500" cy="4.500" r="2.300" fill="#fff"/></svg>
 <i></i>
 <svg width="16" height="10" viewBox="0 0 16 10" fill="none" stroke="#fff" stroke-width="1.400"><path d="M1 9l7-7.500L15 9"/></svg>
 <svg width="20" height="16" viewBox="0 0 20 16"><path d="M5 13c-6 0-6-8 0-8 2-6 11-5 12 2v6z" fill="#aaa"/><path d="M3 13c-4-1-3-5 0-6 4-1 8 2 10 6z" fill="#eee"/><circle cx="14.500" cy="10.500" r="5.500" fill="#ffe000"/><path d="M14.500 7v4M14.500 12.500v1.500" stroke="#222" stroke-width="1.400"/></svg>
 <svg width="20" height="20" viewBox="0 0 20 20" fill="none" stroke="#fff" stroke-width="1.300" style="margin-left:2px"><path d="M1 9C1 0 14-2 18 5M18.500 0v5.500H13M1.500 19v-5.500H7M2 14c2 4 5 5 8 5"/><circle cx="15" cy="15" r="5" fill="#0078d7" stroke="none"/></svg>
 <span data-w="29" style="font-size:14.500px;margin-left:4px">ENG</span>
 <svg width="20" height="16" viewBox="0 0 20 16" fill="none" stroke="#fff" stroke-width="1.500" style="margin-left:16px"><path d="M1 6c5-6.500 13-6.500 18 0M4 9c3.500-4 8.500-4 12 0M7 12c2-2 4-2 6 0"/><circle cx="10" cy="14" r="1.300" fill="#fff"/></svg>
 <svg width="20" height="16" viewBox="0 0 20 16" fill="none" stroke="#fff" stroke-width="1.300" style="margin-left:14px"><path d="M1 5h4l5-4v14l-5-4H1zM13 5l6 6M19 5l-6 6"/></svg>
 <svg width="20" height="13" viewBox="0 0 20 13" style="margin-left:16px"><rect x=".7" y=".7" width="16.500" height="11.500" rx="2.500" fill="none" stroke="#fff" stroke-width="1.400"/><rect x="3" y="3" width="11" height="7" fill="#fff"/><path d="M19 4v5" stroke="#fff" stroke-width="2"/></svg>
 <span class="tr"><span class="d-inline-block" data-w="28">8:30</span><br><span class="d-inline-block" data-w="71">21/11/2565</span></span>
 <svg width="20" height="20" viewBox="0 0 20 20"><circle cx="10" cy="10" r="10" fill="#f4806a"/><text x="6.500" y="14.500" font-size="12" fill="#222">1</text></svg>
</footer>
<div class="run" style="left:868px;width:20px;background:#f4806a"></div>
<div class="run" style="left:984px"></div>
<div class="run" style="left:1259px"></div>
<script>
// Diagram labels: [text, left, right, baseline, vertical?]; a vertical label gives bottom, top and x of its baseline
const L=[["ผู้ดูแลระบบ",169,217,357],["1",349.500,355,325],["สร้าง Pocket",324,380,348],["รายการทำการ",253.500,316,330],["ผลการทำการ",255.500,314,357],["ข้อมูล pocket",394,448,338],["D1",477,491,344],["pocket",514,545,344],["รายชื่อผู้ใช้",588,636,339],["2",676,682,325],["แสดงรายชื่อผู้",649,710,348],["ใช้",673,686,361],["รายชื่อผู้ใช้งาน",679.500,743,267],["ผู้ใช้งาน",762,796,269],["ทั่วไป",767,792,282],["รายชื่อ pocket",716,780,357],["ผู้ใช้งาน",762,796,414.500],["ทั่วไป",767,792,427.500],["ผลการสมัคร",740,793,485],["ข้อมูล",735.500,761,449],["ข้อมูลการสมัคร",679,745,412],["3",676.500,682.500,462],["สมัครสมาชิก",651.500,706.500,485],["4",417,423,462],["รายการทำการ",389.500,452,485],["D1",541,554,475.500],["สมาชิก",578,609,475],["เจ้าหน้าที่รัฐ",231,282,485],["ผลการทำการ",310.500,369,467],["รายการที่จะทำ",306,370,493.500],["ข้อมูลสมาชิก",465,521.500,457],["ผลการทำการ",464,522,493.500],["ใบเสร็จ",514,545.500,539.500],["5",608,614,579.500],["ชำระค่าสินค้า",582,640,603],["หรือบริการ",588.500,633.500,616],["สลิปโอนการโอน",675.500,747.500,539.500],["ร้านค้า",751,778,603],["แจ้งยอดชำระ",656,713,584],["หมายเลขบัญชี",652,716,612],["รหัสผู้ใช้",466,502.500,612],["ข้อมูลราคาสินค้า,บริการ",478.500,580.500,648],["ข้อมูลชื่อบัญชี,ธนาคาร",526,624,667],["ธนาคาร",603,637,740],["รายการสั่งซื้อ",550,492,603,1],["ผลการสั่งซื้อ",553,499,625,1],["สลิปโอนการโอน",739,667,715.500,1]];
const R=[["ผู้ดูแลระบบ",1268,1322.500,402.500],["รายการทำการ",1387,1454,377.500],["1",1552.500,1558.500,363],["สร้าง pocket",1525,1585.500,408],["-hv",1662,1678,371.500],["D1",1732.500,1748,383]];
function put(id,a){const g=document.getElementById(id);for(const [t,x,r,y,v] of a){const e=document.createElementNS("http://www.w3.org/2000/svg","text");e.textContent=t;if(v){e.setAttribute("transform",`translate(${y} ${x}) rotate(-90)`)}else{e.setAttribute("x",x);e.setAttribute("y",y)}if(t.length>1){e.setAttribute("textLength",Math.abs(r-x));e.setAttribute("lengthAdjust","spacingAndGlyphs")}g.append(e)}}
put("tl",L);put("tr",R);
// Track each label so that it fills its intended width
document.querySelectorAll("[data-w]").forEach(e=>{const r=document.createRange();r.selectNodeContents(e);const w=r.getBoundingClientRect().width,n=e.textContent.length;e.style.letterSpacing=((+e.dataset.w-w)/n).toFixed(3)+"px"});
</script>
</body>
</html>
